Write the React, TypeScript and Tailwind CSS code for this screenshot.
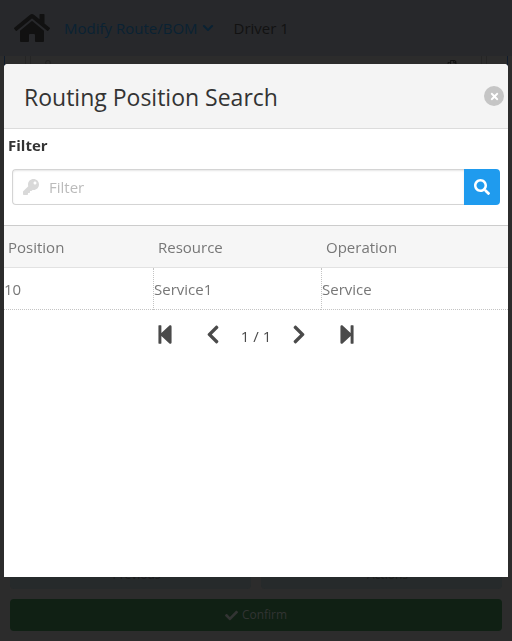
import type { ReactNode } from "react";
import {
  FaCheck,
  FaChevronDown,
  FaChevronLeft,
  FaChevronRight,
  FaHome,
  FaKey,
  FaRegCopy,
  FaRegUser,
  FaSearch,
  FaStepBackward,
  FaStepForward,
  FaTimes,
} from "react-icons/fa";

const rows = [{ position: "10", resource: "Service1", operation: "Service" }];

function PagerButton({ label, children }: { label: string; children: ReactNode }) {
  return (
    <button type="button" aria-label={label} className="flex h-5 w-5 items-center justify-center">
      {children}
    </button>
  );
}

function Page() {
  return (
    <div className="flex min-h-screen flex-col bg-[#2c2c2c]">
      <header className="flex h-14 items-center bg-[#27282b] px-3.5 text-[15px]">
        <a href="#home" aria-label="Home" className="text-[#111111]">
          <FaHome size={36} />
        </a>
        <a href="#modify" className="ml-3.5 flex items-center gap-1 text-[#0a2233]">
          Modify Route/BOM
          <FaChevronDown size={12} />
        </a>
        <span className="ml-5 text-[#121212]">Driver 1</span>
      </header>
      <div className="mx-1 flex flex-1 border-x border-[#101c2c] px-5">
        <div className="flex flex-1 border-x border-[#252525] px-1">
          <div className="flex flex-1 justify-between border-x border-[#252525] px-3 pt-1">
            <FaRegUser size={10} className="text-[#222222]" />
            <FaRegCopy size={10} className="mr-3 text-[#111111]" />
          </div>
        </div>
      </div>
      <footer className="px-2.5 pb-2.5 text-[12px]">
        <div className="grid grid-cols-2 gap-2.5">
          <button type="button" className="h-7 rounded bg-[#262a2b] pl-3 text-[#1b1c1c]">Previous</button>
          <button type="button" className="h-7 rounded bg-[#262a2b] pl-3 text-[#1b1c1c]">Actions</button>
        </div>
        <button
          type="button"
          className="mt-2.5 flex h-8 w-full items-center justify-center gap-1 rounded bg-[#102014] text-[#323433]"
        >
          <FaCheck size={13} />
          Confirm
        </button>
      </footer>
    </div>
  );
}

function SearchDialog() {
  return (
    <section
      role="dialog"
      aria-labelledby="dialog-title"
      className="fixed inset-x-1 top-[10%] flex h-4/5 flex-col overflow-hidden rounded-t bg-white"
    >
      <header className="flex h-[65px] shrink-0 items-center justify-between border-b border-[#dcdcdc] bg-[#f4f4f4] pr-1 pl-5">
        <h1 id="dialog-title" className="pt-0.5 text-[23px] text-[#333333]">
          Routing Position Search
        </h1>
        <button
          type="button"
          aria-label="Close"
          className="flex h-5 w-5 items-center justify-center rounded-full bg-[#c5c5c5] text-white"
        >
          <FaTimes size={11} />
        </button>
      </header>

      <form className="border-b border-[#cccccc] pb-5">
        <label htmlFor="filter" className="block px-1 py-1.5 text-[15px] leading-5 font-bold text-[#333333]">
          Filter
        </label>
        <div className="mx-2 mt-2 flex h-9">
          <div className="flex min-w-0 flex-1 items-center gap-2.5 rounded-l-sm border border-r-0 border-[#d4d4d4] pl-2.5 shadow-[inset_0_1px_2px_#0000001a]">
            <FaKey size={16} className="shrink-0 text-[#d9d9d9]" />
            <input
              id="filter"
              type="text"
              placeholder="Filter"
              className="min-w-0 flex-1 bg-transparent text-[15px] text-[#333333] outline-none placeholder:text-[#bbbbbb]"
            />
          </div>
          <button
            type="submit"
            aria-label="Search"
            className="flex w-9 items-center justify-center rounded-r-sm bg-[#1f9bee] text-white"
          >
            <FaSearch size={16} />
          </button>
        </div>
      </form>

      <table className="w-full table-fixed border-separate border-spacing-0 text-left text-[15px] leading-5 text-[#777777]">
        <colgroup>
          <col className="w-[149px]" />
          <col className="w-[168px]" />
          <col />
        </colgroup>
        <thead>
          <tr className="h-[42px] bg-[#f6f6f6]">
            <th className="border-b border-[#e2e2e2] px-1 font-normal">Position</th>
            <th className="border-b border-[#e2e2e2] px-[5px] font-normal">Resource</th>
            <th className="border-b border-[#e2e2e2] px-[5px] font-normal">Operation</th>
          </tr>
        </thead>
        <tbody>
          {rows.map((row) => (
            <tr key={row.position} className="h-[42px]">
              <td className="border-b border-dotted border-[#c4c4c4]">{row.position}</td>
              <td className="border-b border-l border-dotted border-[#c4c4c4]">{row.resource}</td>
              <td className="border-b border-l border-dotted border-[#c4c4c4]">{row.operation}</td>
            </tr>
          ))}
        </tbody>
      </table>

      <nav aria-label="Pages" className="mt-3 flex items-center justify-center text-[#4a4a4a]">
        <PagerButton label="First page"><FaStepBackward size={21} /></PagerButton>
        <span className="ml-7"><PagerButton label="Previous page"><FaChevronLeft size={21} /></PagerButton></span>
        <span className="mx-4.5 pt-1 text-[15px] leading-5">1 / 1</span>
        <PagerButton label="Next page"><FaChevronRight size={21} /></PagerButton>
        <span className="ml-7"><PagerButton label="Last page"><FaStepForward size={21} /></PagerButton></span>
      </nav>
    </section>
  );
}

export default function App() {
  return (
    <main className="font-['Segoe_UI','Open_Sans',sans-serif]">
      <Page />
      <SearchDialog />
    </main>
  );
}
